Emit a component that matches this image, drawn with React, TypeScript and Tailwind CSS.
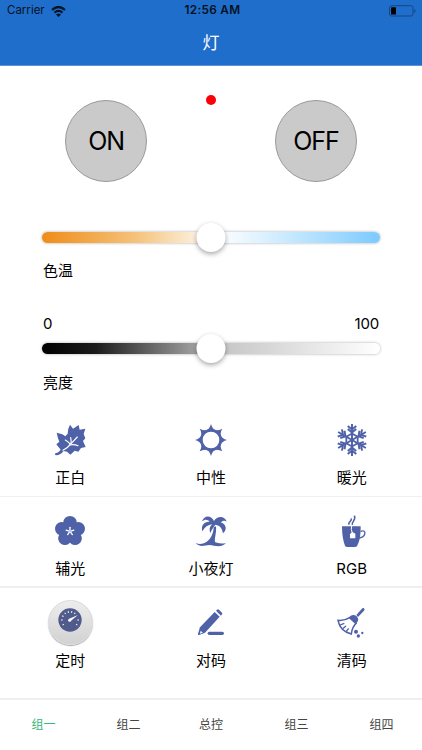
import { useState } from 'react';
import type { ReactNode } from 'react';

const MODE_BLUE = '#4f62a8';

function LeafIcon() {
  return (
    <svg className="w-8 h-8" viewBox="0 0 96 96" fill={MODE_BLUE}>
      <path d="M48 2 L57 14 L74 3 L77 17 L94 14 L89 30 L94 43 L87 51 L95 69 L81 72 L73 83 L62 80 L49 92 L39 83 L29 81 Q18 94 7 94 Q2 94 3 90 Q4 86 8 87 Q15 84 20 77 L7 61 L16 53 L12 43 L8 26 L25 31 L34 37 L41 29 Q40 16 48 2Z" />
      <g fill="none" stroke="#fff" strokeWidth="3.5" strokeLinecap="round">
        <path d="M27 79 Q42 71 49 61 L70 39" />
        <path d="M51 59 Q52 50 50 41" />
        <path d="M49 61 Q43 53 34 48" />
        <path d="M47 63 Q60 60 72 65" />
      </g>
    </svg>
  );
}

function SunIcon() {
  return (
    <svg className="w-8 h-8" viewBox="-48 -48 96 96" fill={MODE_BLUE}>
      {[0, 45, 90, 135, 180, 225, 270, 315].map((angle) => (
        <path key={angle} d="M0 -48 Q4 -33 15 -28 L-15 -28 Q-4 -33 0 -48Z" transform={`rotate(${angle})`} />
      ))}
      <circle r="29" fill="none" stroke={MODE_BLUE} strokeWidth="8" />
    </svg>
  );
}

function SnowIcon() {
  return (
    <svg className="w-8 h-8" viewBox="-48 -49 96 98" fill="none" stroke={MODE_BLUE} strokeWidth="6">
      {[0, 60, 120, 180, 240, 300].map((angle) => (
        <g key={angle} transform={`rotate(${angle})`}>
          <path d="M0 0V-49" />
          <path d="M-13 -43L0 -32L13 -43M-13 -34L0 -23L13 -34" />
          <path d="M0 -20L17.3 -10" strokeWidth="5.5" />
        </g>
      ))}
    </svg>
  );
}

function FlowerIcon() {
  return (
    <svg className="w-8 h-8" viewBox="-48 -49 96 96" fill={MODE_BLUE}>
      {[0, 72, 144, 216, 288].map((angle) => (
        <ellipse key={angle} cx="0" cy="-27" rx="20" ry="19" transform={`rotate(${angle})`} />
      ))}
      <circle r="32" />
      <g stroke="#fff" strokeWidth="4" strokeLinecap="round">
        {[0, 72, 144, 216, 288].map((angle) => (
          <path key={angle} d="M0 -3V-12" transform={`rotate(${angle})`} />
        ))}
      </g>
    </svg>
  );
}

function PalmIcon() {
  return (
    <svg className="w-8 h-8" viewBox="0 0 96 96" fill={MODE_BLUE}>
      <path d="M57 18 C51 3 29 -4 21 19 C30 12 38 13 44 20 C27 20 17 31 22 49 C29 37 39 29 52 28 C43 36 42 44 46 54 C50 44 55 37 61 29 C76 32 81 40 84 55 C98 42 93 27 77 22 C84 16 90 16 95 20 C89 1 66 2 57 18Z" />
      <path d="M56 37 L63 34 C65 54 58 68 60 82 L31 84 C46 74 55 59 56 37Z" />
      <path d="M2 84 C18 91 26 84 38 80 C58 74 70 91 93 84 C78 101 57 91 44 90 C28 90 17 99 2 84Z" />
    </svg>
  );
}

function CupIcon() {
  return (
    <svg className="w-8 h-8" viewBox="0 0 96 96" fill="none" stroke={MODE_BLUE}>
      <path d="M18 34 H74 Q75 73 63 94 Q60 96 56 96 H34 Q29 96 27 92 Q18 70 18 34Z" fill={MODE_BLUE} stroke="none" />
      <path d="M74 49 C93 42 90 65 70 69" strokeWidth="4" />
      <path d="M39 29 C35 19 51 19 45 10M49 30 C46 18 62 16 55 2" strokeWidth="4.5" />
      <path d="M47 32 Q44 43 49 55" stroke="#fff" strokeWidth="3" />
      <path d="M42 57 L49 51 L58 56 V70 H42Z" fill="#fff" stroke="none" />
    </svg>
  );
}

function TimerIcon() {
  return (
    <div className="size-[45px] -mt-[7px] -mb-[6px] rounded-full border border-[#dadada] bg-linear-to-b from-[#ededed] to-[#d2d2d2] shadow-[0_1px_1px_rgba(0,0,0,0.35)] flex justify-center pt-[7px]">
      <svg className="w-6 h-6" viewBox="-36 -36 72 72">
        <circle r="35" fill="#505a8b" />
        {[-125, -90, -62, -36, -12, 12, 36, 90, 125].map((angle) => (
          <path key={angle} d="M0 -22V-27" stroke="#fff" strokeWidth="3" transform={`rotate(${angle})`} />
        ))}
        <path d="M-4 -3 L24 -15 L1 4Z" fill="#fff" />
        <circle r="4.5" cx="-1" cy="1" fill="#fff" />
      </svg>
    </div>
  );
}

function PencilIcon() {
  return (
    <svg className="w-8 h-8" viewBox="0 0 96 96" fill={MODE_BLUE}>
      <path d="M59 15 L74 29 L30 77 L12 84 Q8 85 9 80 L15 61Z" />
      <path d="M63 11 L66 8 Q69 5 72 8 L81 17 Q83 20 81 22 L78 26Z" />
      <path d="M17 71 L23 77 L15 80Z" fill="#fff" />
      <rect x="38" y="74" width="49" height="10" rx="5" />
    </svg>
  );
}

function BroomIcon() {
  return (
    <svg className="w-8 h-8" viewBox="0 0 96 96" fill={MODE_BLUE}>
      <path d="M61 24 L79 4 Q83 2 85 5 Q87 8 84 11 L66 30Z" />
      <path d="M43 27 Q53 20 62 28 Q70 37 64 45 L59 52 L38 33Z" />
      <path d="M42 31 Q26 42 6 40 Q12 72 46 81 Q48 60 62 47" fill="none" stroke={MODE_BLUE} strokeWidth="4.5" />
      <path d="M12 54 L25 49M20 65 L30 57M31 73 L38 64" fill="none" stroke={MODE_BLUE} strokeWidth="4" />
      <circle cx="60" cy="74" r="6" />
      <circle cx="79" cy="78" r="3.5" />
      <circle cx="67" cy="87" r="5" />
    </svg>
  );
}

function StatusBar() {
  return (
    <div className="h-[22px] grid grid-cols-3 items-center pl-[7px] pr-[6px] text-[#06111f]">
      <div className="flex items-center gap-[6px] text-[11.5px]">
        <span>Carrier</span>
        <svg className="w-[15px] h-[11px]" viewBox="0 0 15 11" fill="none" stroke="#071526">
          <path d="M1 4 Q7.5 -2 14 4" strokeWidth="2.2" />
          <path d="M3.5 6.6 Q7.5 3 11.5 6.6" strokeWidth="2.1" />
          <path d="M7.5 11 L5 8.5 Q7.5 6.5 10 8.5Z" fill="#071526" stroke="none" />
        </svg>
      </div>
      <span className="text-center text-[11.8px] font-semibold tracking-[0.3px] pl-[2px] whitespace-nowrap">12:56 AM</span>
      <svg className="w-[27px] h-3 justify-self-end" viewBox="0 0 27 12">
        <rect x="0.5" y="0.7" width="23.5" height="10.3" rx="2" fill="none" stroke="#174783" />
        <rect x="2" y="2.2" width="5" height="7.3" rx="0.5" fill="#000" />
        <path d="M25.3 4 Q28 6 25.3 8Z" fill="#174783" />
      </svg>
    </div>
  );
}

interface SliderProps {
  value: number;
  onChange: (value: number) => void;
  label: string;
  trackClass: string;
}

function Slider({ value, onChange, label, trackClass }: SliderProps) {
  return (
    <div className="relative h-[29px] -mx-[1px] flex items-center">
      <div className={`w-full h-[11px] rounded-full shadow-[0_0_3px_rgba(0,0,0,0.35)] ${trackClass}`} />
      <div
        className="absolute top-0 size-[29px] -translate-x-1/2 rounded-full bg-white shadow-[0_2px_5px_rgba(0,0,0,0.35)]"
        style={{ left: `${value}%` }}
      />
      <input
        type="range"
        aria-label={label}
        value={value}
        onChange={(e) => onChange(Number(e.target.value))}
        className="absolute inset-0 w-full opacity-0"
      />
    </div>
  );
}

interface Mode {
  name: string;
  icon: ReactNode;
}

const modeRows: Mode[][] = [
  [
    { name: '正白', icon: <LeafIcon /> },
    { name: '中性', icon: <SunIcon /> },
    { name: '暖光', icon: <SnowIcon /> },
  ],
  [
    { name: '辅光', icon: <FlowerIcon /> },
    { name: '小夜灯', icon: <PalmIcon /> },
    { name: 'RGB', icon: <CupIcon /> },
  ],
  [
    { name: '定时', icon: <TimerIcon /> },
    { name: '对码', icon: <PencilIcon /> },
    { name: '清码', icon: <BroomIcon /> },
  ],
];

const rowClasses = [
  'h-[81px] pt-2 border-b border-[#f0f0f0]',
  'h-[91px] pt-[18px] border-b-2 border-[#efefef]',
  'h-[112px] pt-[19px] border-b-2 border-[#efefef]',
];

const groups = ['组一', '组二', '总控', '组三', '组四'];

export default function App() {
  const [temperature, setTemperature] = useState(50);
  const [brightness, setBrightness] = useState(50);
  const [activeGroup, setActiveGroup] = useState(0);

  return (
    <div className="w-[422px] h-[750px] overflow-hidden flex flex-col bg-white text-black font-[Inter,'Noto_Sans_CJK_SC',sans-serif]">
      <header className="h-[66px] bg-[#1f6ecb] border-b border-[#5b94d8]">
        <StatusBar />
        <h1 className="text-center text-[17px] leading-[42px] text-white">灯</h1>
      </header>

      <div className="h-[150px] flex justify-between px-[65px] pt-[34px]">
        <button className="size-[82px] pt-[2px] rounded-full border border-[#999] bg-[#cacaca] text-[25px] tracking-[-1.3px]">ON</button>
        <div className="size-[10px] -mt-[5px] rounded-full bg-[#fb0007]" />
        <button className="size-[82px] pt-[2px] rounded-full border border-[#999] bg-[#cacaca] text-[25px] tracking-[-1.1px]">OFF</button>
      </div>

      <div className="h-[200px] px-[43px] pt-[7px] text-[15px] leading-5">
        <Slider
          value={temperature}
          onChange={setTemperature}
          label="色温"
          trackClass="bg-[linear-gradient(to_right,#ef8c19,#f5c37c_28%,#fcf0dc_46%,#ffffff_52%,#c2e7ff_75%,#7ccaff)]"
        />
        <p className="pt-[9px]">色温</p>
        <div className="flex justify-between mt-[33px]">
          <span>0</span>
          <span className="tracking-[-0.2px]">100</span>
        </div>
        <Slider
          value={brightness}
          onChange={setBrightness}
          label="亮度"
          trackClass="bg-[linear-gradient(to_right,#000,#1c1c1c_16%,#999_44%,#c8c8c8_55%,#fff)]"
        />
        <p className="pt-[10px]">亮度</p>
      </div>

      {modeRows.map((row, index) => (
        <div key={index} className={`grid grid-cols-3 ${rowClasses[index]}`}>
          {row.map((mode) => (
            <button key={mode.name} className="flex flex-col items-center justify-start gap-3 text-[15px] leading-5">
              {mode.icon}
              <span>{mode.name}</span>
            </button>
          ))}
        </div>
      ))}

      <nav className="flex-1 grid grid-cols-[87px_83px_82px_89px_81px]">
        {groups.map((group, index) => (
          <button
            key={group}
            onClick={() => setActiveGroup(index)}
            className={`text-[12px] ${index === activeGroup ? 'text-[#35b878]' : 'text-[#444]'}`}
          >
            {group}
          </button>
        ))}
      </nav>
    </div>
  );
}
